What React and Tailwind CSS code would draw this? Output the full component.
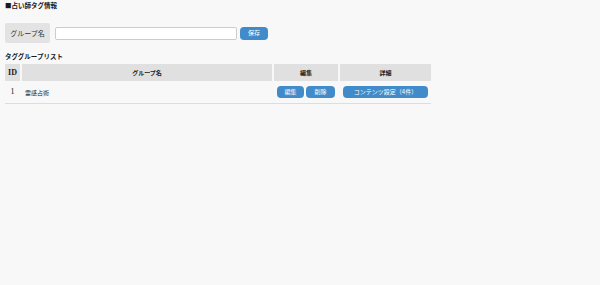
import React from "react";

const rows = [{ id: 1, name: "霊感占術", count: 4 }];

const BlueButton = ({ children, className = "" }) => (
  <button
    className={`h-[12px] rounded-[4px] bg-[#428bca] text-white text-[6px] leading-none flex items-center justify-center ${className}`}
  >
    {children}
  </button>
);

const App = () => {
  return (
    <div
      className="w-full h-[285px] bg-[#f8f8f8] text-[#1a1a1a] px-[5px] pt-[2px]"
      style={{ fontFamily: '"Noto Sans CJK JP", "Noto Sans", sans-serif' }}
    >
      {/* Title */}
      <h1 className="text-[6.5px] font-bold leading-[7px] h-[8px]">■占い師タグ情報</h1>

      {/* Form */}
      <div className="flex items-center mt-[13px] h-[20px]">
        <div className="w-[45px] h-[20px] bg-[#e3e3e3] rounded-[2px] flex items-center justify-center text-[7px] text-[#333]">
          グループ名
        </div>
        <input
          type="text"
          className="ml-[5px] w-[182px] h-[13px] bg-white border border-[#cccccc] rounded-[2px]"
        />
        <BlueButton className="ml-[3px] w-[28px] h-[13px]">保存</BlueButton>
      </div>

      {/* List */}
      <h2 className="mt-[10px] text-[6.5px] font-bold leading-[7px]">タググループリスト</h2>

      <div className="mt-[4px] w-[426px]">
        <div className="grid grid-cols-[15px_250px_64px_91px] gap-x-[2px] h-[17px] text-[6px] font-bold">
          <div
            className="bg-[#e0e0e0] flex items-center justify-center text-[8px]"
            style={{ fontFamily: '"Liberation Serif", serif' }}
          >
            ID
          </div>
          <div className="bg-[#e0e0e0] flex items-center justify-center">グループ名</div>
          <div className="bg-[#e0e0e0] flex items-center justify-center">編集</div>
          <div className="bg-[#e0e0e0] flex items-center justify-center">詳細</div>
        </div>
        {rows.map((r) => (
          <div
            key={r.id}
            className="grid grid-cols-[15px_250px_64px_91px] gap-x-[2px] h-[23px] border-b border-[#dddddd] text-[6px]"
          >
            <div
              className="flex items-center justify-center text-[8px]"
              style={{ fontFamily: '"Liberation Serif", serif' }}
            >
              {r.id}
            </div>
            <div className="flex items-center pl-[3px]">{r.name}</div>
            <div className="flex items-center gap-[2px] pl-[3px]">
              <BlueButton className="w-[27px]">編集</BlueButton>
              <BlueButton className="w-[29px]">削除</BlueButton>
            </div>
            <div className="flex items-center pl-[3px]">
              <BlueButton className="w-[85px]">コンテンツ設定（{r.count}件）</BlueButton>
            </div>
          </div>
        ))}
      </div>
    </div>
  );
};

export default App;
